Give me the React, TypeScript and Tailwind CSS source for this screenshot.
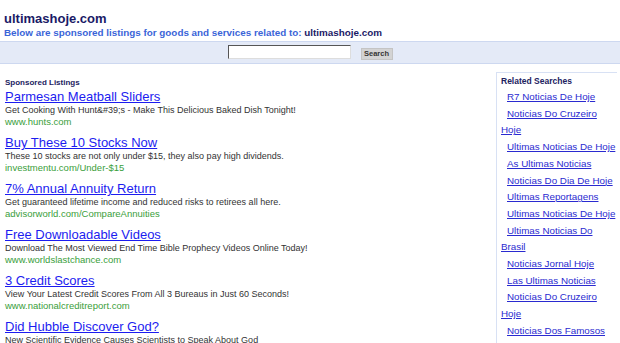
import React from 'react'

const ads = [
  {
    title: 'Parmesan Meatball Sliders',
    desc: 'Get Cooking With Hunt&#39;s - Make This Delicious Baked Dish Tonight!',
    url: 'www.hunts.com',
  },
  {
    title: 'Buy These 10 Stocks Now',
    desc: 'These 10 stocks are not only under $15, they also pay high dividends.',
    url: 'investmentu.com/Under-$15',
  },
  {
    title: '7% Annual Annuity Return',
    desc: 'Get guaranteed lifetime income and reduced risks to retirees all here.',
    url: 'advisorworld.com/CompareAnnuities',
  },
  {
    title: 'Free Downloadable Videos',
    desc: 'Download The Most Viewed End Time Bible Prophecy Videos Online Today!',
    url: 'www.worldslastchance.com',
  },
  {
    title: '3 Credit Scores',
    desc: 'View Your Latest Credit Scores From All 3 Bureaus in Just 60 Seconds!',
    url: 'www.nationalcreditreport.com',
  },
  {
    title: 'Did Hubble Discover God?',
    desc: 'New Scientific Evidence Causes Scientists to Speak About God',
    url: 'www.y-jesus.com',
  },
]

const related = [
  'R7 Noticias De Hoje',
  'Noticias Do Cruzeiro Hoje',
  'Ultimas Noticias De Hoje',
  'As Ultimas Noticias',
  'Noticias Do Dia De Hoje',
  'Ultimas Reportagens',
  'Ultimas Noticias De Hoje',
  'Ultimas Noticias Do Brasil',
  'Noticias Jornal Hoje',
  'Las Ultimas Noticias',
  'Noticias Do Cruzeiro Hoje',
  'Noticias Dos Famosos',
]

export default function App() {
  return (
    <div className="w-[620px] h-[343px] overflow-hidden bg-white" style={{ fontFamily: '"Liberation Sans", Arial, sans-serif' }}>
      {/* header */}
      <div className="pl-[4px] pt-[11px]">
        <h1 className="text-[13px] leading-[16px] font-bold text-[#1a1a66]">ultimashoje.com</h1>
        <p className="text-[9.85px] leading-[12px] font-bold text-[#3a64d8]">
          Below are sponsored listings for goods and services related to:{' '}
          <span className="text-[#1a1a66]">ultimashoje.com</span>
        </p>
      </div>

      {/* search band */}
      <div className="mt-[2px] h-[23px] bg-[#e4eaf7] border-y border-[#cdd8f0] flex justify-center items-start">
        <input
          type="text"
          className="mt-[3px] w-[123px] h-[14px] bg-white border border-t-[#555] border-l-[#555] border-r-[#ddd] border-b-[#ddd]"
        />
        <button className="ml-[10px] mt-[6px] w-[32px] h-[12px] bg-[#d3d3d3] border border-[#c4c4c4] text-[7.5px] leading-[10px] font-bold text-[#333]">
          Search
        </button>
      </div>

      <div className="flex pr-[3px]">
        {/* sponsored listings */}
        <div className="flex-1 pl-[5px] pt-[12px]">
          <div className="text-[8px] leading-[13px] font-bold text-[#22225f]">Sponsored Listings</div>
          {ads.map((ad) => (
            <div key={ad.title} className="mb-[8px]">
              <div className="text-[13px] leading-[16px] text-[#1c1cf0] underline">{ad.title}</div>
              <div className="text-[9px] leading-[11px] text-[#333]">{ad.desc}</div>
              <div className="text-[9.5px] leading-[11px] text-[#3a9e3a]">{ad.url}</div>
            </div>
          ))}
        </div>

        {/* related searches */}
        <div className="mt-[8px] w-[121px] shrink-0 border-l border-t border-[#d8e1f4] pl-[4px] pt-[3px]">
          <div className="text-[8.5px] leading-[11px] font-bold text-[#22225f]">Related Searches</div>
          <div className="mt-[2px]">
            {related.map((r, i) => (
              <div key={i} className="indent-[6px] text-[9.8px] leading-[16.7px]">
                <a className="text-[#2a2ad0] underline">{r}</a>
              </div>
            ))}
          </div>
        </div>
      </div>
    </div>
  )
}
